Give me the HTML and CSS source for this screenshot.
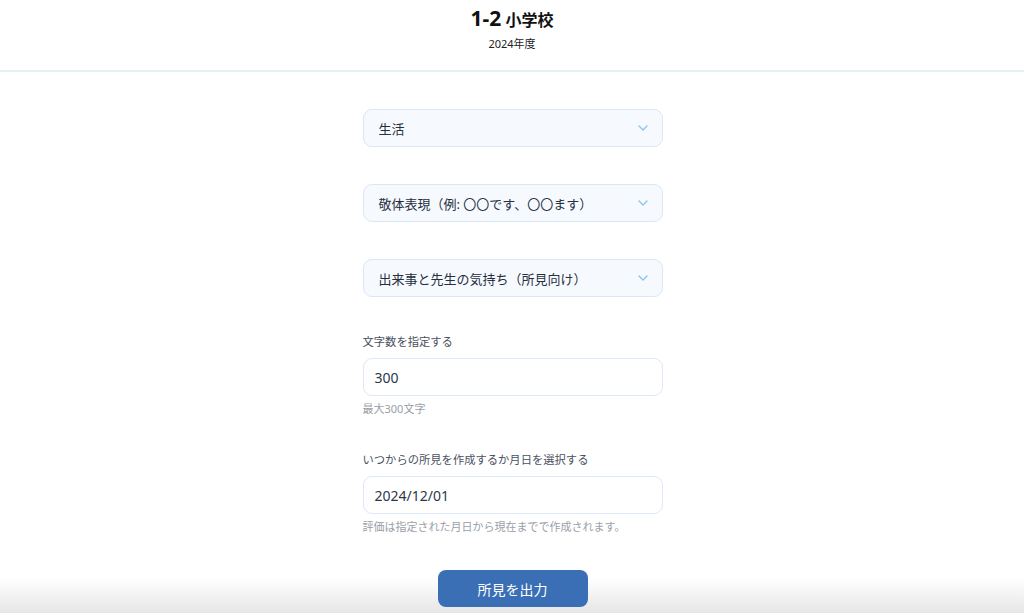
FILE: index.html
```html
<!DOCTYPE html>
<html lang="ja">
<head>
  <meta charset="utf-8">
  <title>所見作成</title>
  <link rel="stylesheet" href="styles.css">
</head>
<body>
  <header class="header">
    <h1 class="title"><span class="class-no">1-2</span> 小学校</h1>
    <p class="year">2024年度</p>
  </header>

  <main class="form">
    <div class="select-box">
      <span>生活</span>
      <svg class="chevron" width="10" height="6" viewBox="0 0 10 6"><path d="M1 1l4 4 4-4" fill="none" stroke="#8cc4ee" stroke-width="1.4" stroke-linecap="round" stroke-linejoin="round"/></svg>
    </div>
    <div class="select-box">
      <span>敬体表現（例: 〇〇です、〇〇ます）</span>
      <svg class="chevron" width="10" height="6" viewBox="0 0 10 6"><path d="M1 1l4 4 4-4" fill="none" stroke="#8cc4ee" stroke-width="1.4" stroke-linecap="round" stroke-linejoin="round"/></svg>
    </div>
    <div class="select-box">
      <span>出来事と先生の気持ち（所見向け）</span>
      <svg class="chevron" width="10" height="6" viewBox="0 0 10 6"><path d="M1 1l4 4 4-4" fill="none" stroke="#8cc4ee" stroke-width="1.4" stroke-linecap="round" stroke-linejoin="round"/></svg>
    </div>

    <div class="field">
      <label class="label">文字数を指定する</label>
      <div class="input-box">300</div>
      <p class="hint">最大300文字</p>
    </div>

    <div class="field">
      <label class="label">いつからの所見を作成するか月日を選択する</label>
      <div class="input-box">2024/12/01</div>
      <p class="hint">評価は指定された月日から現在までで作成されます。</p>
    </div>

    <div class="actions">
      <button class="submit">所見を出力</button>
    </div>
  </main>
</body>
</html>
```

FILE: styles.css
```css
html, body {
  margin: 0;
  padding: 0;
}
body {
  min-height: 613px;
  font-family: "Noto Sans", "Noto Sans CJK JP", sans-serif;
  color: #2d3748;
  background: linear-gradient(to bottom, #ffffff 0, #ffffff 578px, #e6e6e6 613px);
  background-repeat: no-repeat;
}
.header {
  height: 72px;
  border-bottom: 2px solid #e3f0f4;
  text-align: center;
  box-sizing: border-box;
  padding-top: 5px;
}
.title {
  margin: 0;
  font-size: 16px;
  font-weight: 700;
  line-height: 26px;
  color: #111;
}
.class-no {
  font-size: 21px;
}
.year {
  margin: 3px 0 0;
  font-size: 11px;
  line-height: 16px;
  color: #222;
}
.form {
  width: 300px;
  margin: 37px auto 0;
  padding-left: 1px;
}
.select-box {
  height: 38px;
  box-sizing: border-box;
  border: 1.5px solid #d9e7f7;
  border-radius: 9px;
  background: #f6faff;
  display: flex;
  align-items: center;
  justify-content: space-between;
  padding: 0 14px 0 15px;
  font-size: 13px;
  color: #26303d;
  margin-bottom: 37px;
}
.chevron {
  display: block;
}
.field {
  margin-bottom: 35px;
}
.label {
  display: block;
  font-size: 11.3px;
  line-height: 16px;
  color: #4a5160;
  margin-bottom: 8px;
}
.input-box {
  height: 38px;
  box-sizing: border-box;
  border: 1.5px solid #dde8f6;
  border-radius: 9px;
  background: #fff;
  display: flex;
  align-items: center;
  padding: 0 11px;
  font-size: 14px;
}
.hint {
  margin: 5px 0 0;
  font-size: 11px;
  line-height: 16px;
  color: #9aa0a8;
}
.actions {
  display: flex;
  justify-content: center;
}
.submit {
  width: 150px;
  height: 37px;
  border: none;
  border-radius: 8px;
  background: #3a6fb6;
  color: #fff;
  font-family: "Noto Sans CJK JP", sans-serif;
  font-size: 14px;
  cursor: pointer;
}
```
